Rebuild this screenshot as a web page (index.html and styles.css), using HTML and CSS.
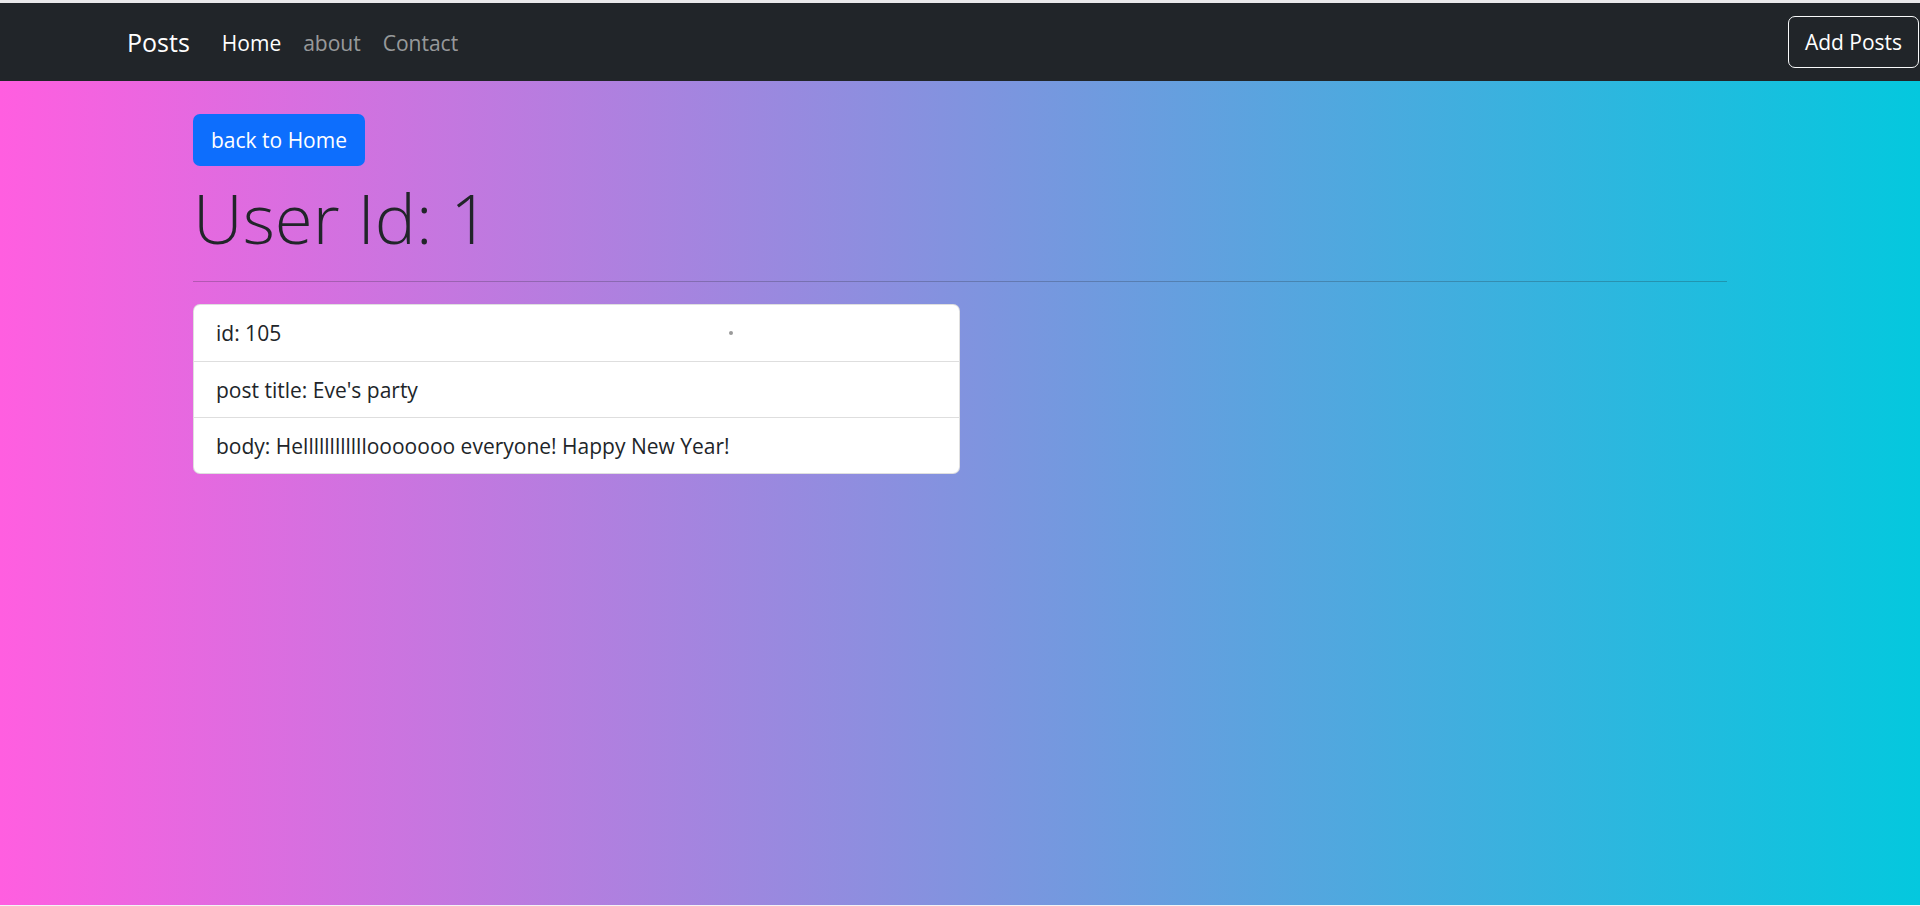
FILE: index.html
```html
<!DOCTYPE html>
<html lang="en">
<head>
<meta charset="utf-8">
<title>Posts</title>
<link rel="stylesheet" href="styles.css">
</head>
<body>
<div class="topstrip"></div>
<nav class="navbar">
  <a class="brand" href="#">Posts</a>
  <ul class="nav">
    <li><a class="nav-link active" href="#">Home</a></li>
    <li><a class="nav-link" href="#">about</a></li>
    <li><a class="nav-link" href="#">Contact</a></li>
  </ul>
  <a class="btn-outline" href="#">Add Posts</a>
</nav>
<main class="main">
  <div class="container">
    <a class="btn-primary" href="#">back to Home</a>
    <h1 class="display">User Id: 1</h1>
    <hr class="divider">
    <ul class="list-group">
      <li class="list-item">id: 105<span class="dot"></span></li>
      <li class="list-item">post title: Eve's party</li>
      <li class="list-item">body: Hellllllllllllooooooo everyone! Happy New Year!</li>
    </ul>
  </div>
</main>
</body>
</html>
```
FILE: styles.css
```css
* { box-sizing: border-box; }
html, body { margin: 0; padding: 0; }
body {
  background: #f4f4f4;
  font-family: "Open Sans", "Noto Sans", "Liberation Sans", sans-serif;
  color: #212529;
  height: 906px;
  overflow: hidden;
}
.topstrip { height: 3px; background: #e9e9ea; }
.navbar {
  height: 78px;
  background: #212529;
  display: flex;
  align-items: center;
  padding-left: 127px;
  padding-right: 1px;
}
.brand {
  color: #fff;
  text-decoration: none;
  font-size: 25px;
  line-height: 40px;
  margin-right: 21px;
}
.nav { list-style: none; display: flex; margin: 0; padding: 0; }
.nav-link {
  display: block;
  padding: 2px 11px 0;
  font-size: 21px;
  line-height: 33px;
  color: rgba(255,255,255,.55);
  text-decoration: none;
}
.nav-link.active { color: #fff; }
.btn-outline {
  margin-left: auto;
  display: block;
  width: 131px;
  height: 52px;
  border: 1px solid #f8f9fa;
  border-radius: 7px;
  color: #fff;
  text-decoration: none;
  font-size: 21px;
  line-height: 50px;
  text-align: center;
}
.main {
  height: 824px;
  background: linear-gradient(90deg, #ff5ee0 0%, #04c8de 100%);
}
.container {
  width: 1534px;
  margin: 0 auto;
  padding-top: 33px;
}
.btn-primary {
  display: inline-block;
  width: 172px;
  height: 52px;
  background: #0d6efd;
  color: #fff;
  text-decoration: none;
  border-radius: 7px;
  font-size: 21px;
  line-height: 52px;
  text-align: center;
}
.display {
  margin: 5px 0 0;
  font-size: 69px;
  font-weight: 300;
  line-height: 92px;
  color: #212529;
}
.divider {
  margin: 18px 0 22px;
  border: 0;
  border-top: 1px solid rgba(33,37,41,.25);
}
.list-group {
  list-style: none;
  margin: 0;
  padding: 0;
  width: 767px;
  background: #fff;
  border: 1px solid rgba(0,0,0,.125);
  border-radius: 7px;
}
.list-item {
  position: relative;
  padding: 11px 22px;
  font-size: 21px;
  line-height: 34px;
  height: 56px;
  border-top: 1px solid #dedede;
}
.list-item:first-child { border-top: 0; height: 56px; }
.dot {
  position: absolute;
  left: 535px;
  top: 26px;
  width: 4px;
  height: 4px;
  border-radius: 50%;
  background: #9a9a9a;
}
```
